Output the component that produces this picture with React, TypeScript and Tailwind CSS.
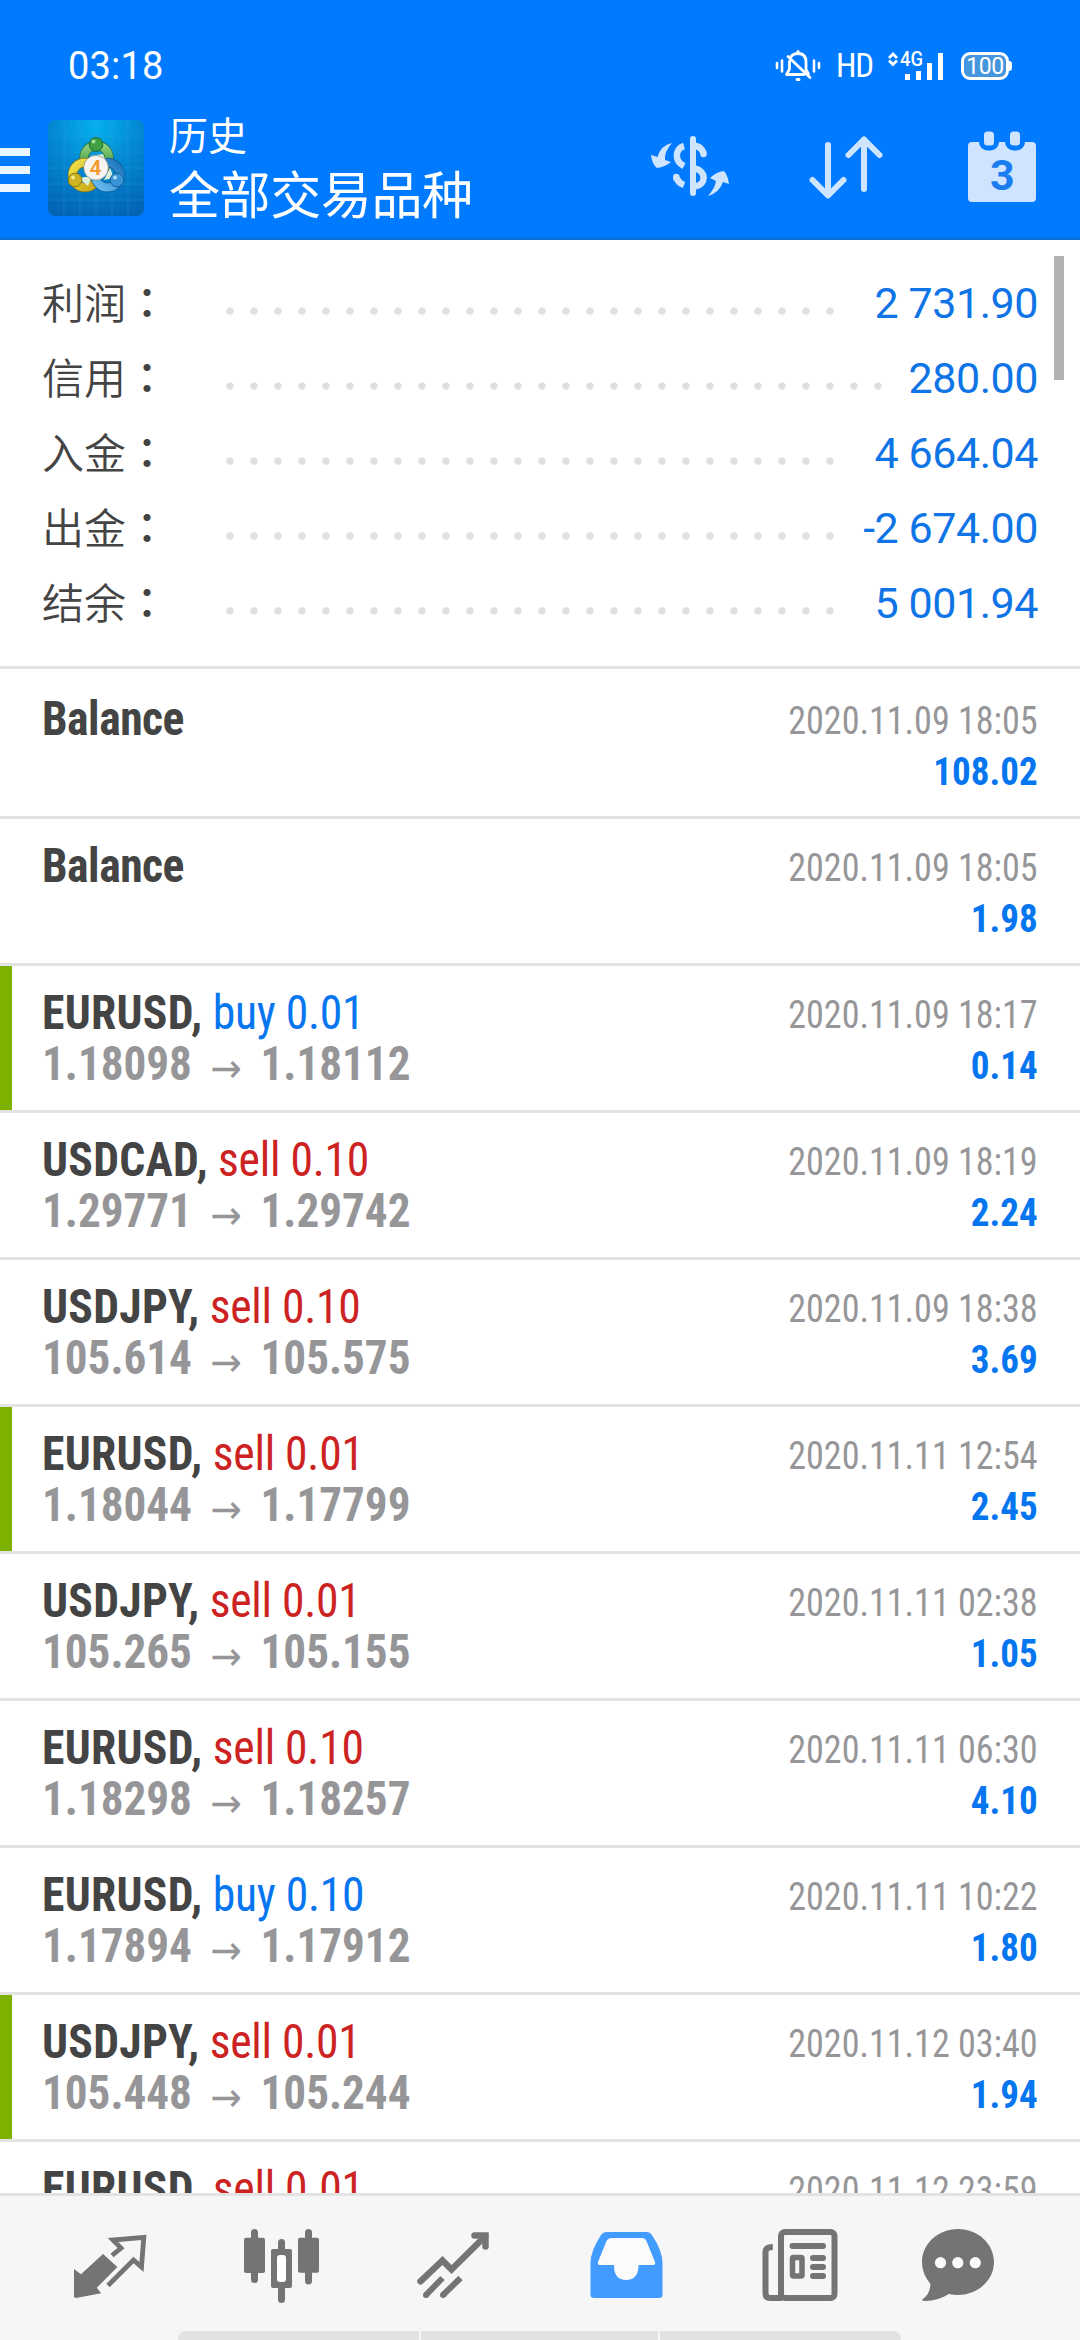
import type { ReactNode } from 'react';

type Deal = {
  symbol: string;
  side?: 'buy' | 'sell';
  volume?: string;
  from?: string;
  to?: string;
  time: string;
  profit?: string;
  marked?: boolean;
};

const SUMMARY = [
  { label: '利润', value: '2 731.90' },
  { label: '信用', value: '280.00' },
  { label: '入金', value: '4 664.04' },
  { label: '出金', value: '-2 674.00' },
  { label: '结余', value: '5 001.94' },
];

const DEALS: Deal[] = [
  { symbol: 'Balance', time: '2020.11.09 18:05', profit: '108.02' },
  { symbol: 'Balance', time: '2020.11.09 18:05', profit: '1.98' },
  { symbol: 'EURUSD', side: 'buy', volume: '0.01', from: '1.18098', to: '1.18112', time: '2020.11.09 18:17', profit: '0.14', marked: true },
  { symbol: 'USDCAD', side: 'sell', volume: '0.10', from: '1.29771', to: '1.29742', time: '2020.11.09 18:19', profit: '2.24' },
  { symbol: 'USDJPY', side: 'sell', volume: '0.10', from: '105.614', to: '105.575', time: '2020.11.09 18:38', profit: '3.69' },
  { symbol: 'EURUSD', side: 'sell', volume: '0.01', from: '1.18044', to: '1.17799', time: '2020.11.11 12:54', profit: '2.45', marked: true },
  { symbol: 'USDJPY', side: 'sell', volume: '0.01', from: '105.265', to: '105.155', time: '2020.11.11 02:38', profit: '1.05' },
  { symbol: 'EURUSD', side: 'sell', volume: '0.10', from: '1.18298', to: '1.18257', time: '2020.11.11 06:30', profit: '4.10' },
  { symbol: 'EURUSD', side: 'buy', volume: '0.10', from: '1.17894', to: '1.17912', time: '2020.11.11 10:22', profit: '1.80' },
  { symbol: 'USDJPY', side: 'sell', volume: '0.01', from: '105.448', to: '105.244', time: '2020.11.12 03:40', profit: '1.94', marked: true },
  { symbol: 'EURUSD', side: 'sell', volume: '0.01', time: '2020.11.12 23:59' },
];

export default function App() {
  return (
    <div className="flex h-[2340px] w-[1080px] flex-col overflow-hidden bg-white font-['Roboto','Noto_Sans_CJK_SC',sans-serif]">
      <header className="h-[240px] shrink-0 border-b-3 border-[#0a6edc] bg-[#007aff]">
        <StatusBar />
        <Toolbar />
      </header>
      <main className="relative min-h-0 flex-1 overflow-hidden">
        <Summary />
        <ul>
          {DEALS.map((deal, i) => (
            <DealRow key={i} deal={deal} first={i === 0} />
          ))}
        </ul>
        {/* scrollbar thumb */}
        <div className="absolute top-4 right-4 h-[124px] w-[10px] bg-[#b2b2b2]" />
      </main>
      <TabBar />
    </div>
  );
}

function StatusBar() {
  return (
    <div className="flex h-[108px] items-start justify-between pr-[68px] pl-[68px] text-white">
      <span className="mt-[42px] text-[38px] leading-[48px] tracking-[0.2px]">03:18</span>
      <div className="mt-[46px] flex h-10 items-center">
        <svg className="h-10 w-[46px]" viewBox="0 0 46 40" fill="none" stroke="#fff" strokeLinecap="round">
          <path d="M2 17v5M7 14.5v11M39 14.5v11M44 17v5" strokeWidth="2.6" />
          <path
            d="M16 10.5Q18.5 7.5 23 7.5Q31 7.5 31 16V23.5L33.5 28M14.5 15.5V23L11.5 28.5H29M13 10.5L35 31.5"
            strokeWidth="2.8"
            strokeLinejoin="round"
          />
          <path d="M23 5.5v1.5M22 33.5h2" strokeWidth="3" />
        </svg>
        <span className="ml-[15px] w-[39px] text-[33px] leading-10 tracking-[-1.2px] font-stretch-[80%]">HD</span>
        <svg className="ml-[12px] h-10 w-[60px]" viewBox="0 0 60 40">
          <path d="M2 12l4-4 4 4M2 14.5l4 4 4-4" fill="none" stroke="#fff" strokeWidth="2.8" />
          <text x="13" y="20" fill="#fff" fontSize="20" fontWeight="500" textLength="23" lengthAdjust="spacingAndGlyphs">
            4G
          </text>
          <path d="M20.5 28v6M31.5 25v9M42.5 17v17M53.5 7v27" stroke="#fff" strokeWidth="5" />
        </svg>
        <div className="ml-[14px] flex h-[28px] w-[48px] items-center justify-center rounded-[9px] border-3 border-white bg-[#4596dd] text-[23px] leading-none tracking-[-0.5px]">
          100
        </div>
        <div className="h-[10px] w-[3px] rounded-r-full bg-white" />
      </div>
    </div>
  );
}

function Toolbar() {
  return (
    <div className="flex h-[129px] items-start">
      <div className="mt-10 flex w-[30px] flex-col gap-[10px]">
        <div className="h-2 bg-[#eaf6ff]" />
        <div className="h-2 bg-[#eaf6ff]" />
        <div className="h-2 bg-[#eaf6ff]" />
      </div>
      <Logo />
      <div className="mt-[3px] ml-[25px] flex flex-col text-white">
        <span className="text-[39px] leading-[52px]">历史</span>
        <span className="mt-[2px] text-[51px] leading-[64px] tracking-[-0.4px]">全部交易品种</span>
      </div>
      <svg className="mt-[22px] ml-auto h-[72px] w-[90px]" viewBox="0 0 90 72" fill="none" stroke="#cfe5ff" strokeWidth="6.5">
        <path d="M48 9v54" strokeWidth="6" strokeLinecap="round" />
        <path d="M39 16C30 18.5 29 31 39 36M39 55Q33.5 53 31.5 48" />
        <path d="M51 16Q57 17.5 58.5 23.5M31.3 47v1M58.5 23v1" strokeLinecap="round" />
        <path d="M50 38.5C61.5 41 61.5 54.500 50 56.500" />
        <path
          d="M27 13Q16 15 12.5 27L6 25Q7 34 12 38Q20 37 26 32L20 30Q19 22 27 13ZM63 66Q74 63 78 52L84 54Q83 46 79 41Q71 42 65 48L71 51Q70 58 63 66Z"
          fill="#cfe5ff"
          stroke="none"
        />
      </svg>
      <svg
        className="mt-[22px] ml-[66px] h-[72px] w-[90px]"
        viewBox="0 0 90 72"
        fill="none"
        stroke="#cfe5ff"
        strokeWidth="6"
        strokeLinecap="round"
        strokeLinejoin="round"
      >
        <path d="M27 15v50M11.5 50L27 65.5L42.5 50" />
        <path d="M63 59V9.5M47.5 25L63 9.5L78.5 25" />
      </svg>
      <svg className="mt-[18px] mr-9 ml-[69px] h-[80px] w-[84px]" viewBox="0 0 84 80">
        <rect x="8" y="16" width="68" height="60" rx="4" fill="#cfe5ff" />
        <g fill="#cfe5ff" stroke="#007aff" strokeWidth="5">
          <rect x="21.5" y="3" width="15" height="19" rx="6" />
          <rect x="47.5" y="3" width="15" height="19" rx="6" />
        </g>
        <text x="42.3" y="63.5" fill="#1a7df2" fontSize="43" fontWeight="700" textAnchor="middle" className="font-stretch-[88%]">
          3
        </text>
      </svg>
    </div>
  );
}

function Logo() {
  return (
    <svg className="mt-3 ml-[18px] h-24 w-24" viewBox="0 0 96 96">
      <defs>
        <radialGradient id="logoBg" cx="0.5" cy="0.05" r="1">
          <stop offset="0" stopColor="#05b0ec" />
          <stop offset="0.45" stopColor="#0389d2" />
          <stop offset="1" stopColor="#0263b4" />
        </radialGradient>
        <linearGradient id="logoGreen" x1="0" y1="0" x2="0" y2="1">
          <stop offset="0" stopColor="#8fd07a" />
          <stop offset="1" stopColor="#2c8a36" />
        </linearGradient>
        <linearGradient id="logoYellow" x1="0" y1="0" x2="1" y2="1">
          <stop offset="0" stopColor="#efe04a" />
          <stop offset="1" stopColor="#c9a516" />
        </linearGradient>
        <linearGradient id="logoBlue" x1="0" y1="1" x2="1" y2="0">
          <stop offset="0" stopColor="#6cc0f2" />
          <stop offset="1" stopColor="#1b74bb" />
        </linearGradient>
      </defs>
      <rect width="96" height="96" rx="7" fill="url(#logoBg)" />
      <path
        d="M16 0v96M32 0v96M48 0v96M64 0v96M80 0v96M0 16h96M0 32h96M0 48h96M0 64h96M0 80h96"
        stroke="#5cc4f0"
        strokeOpacity="0.18"
      />
      {/* three interlocked rings */}
      <g fill="none">
        <circle cx="48.5" cy="38" r="12.5" stroke="#2c6a34" strokeWidth="9.4" />
        <circle cx="48.5" cy="38" r="12.5" stroke="url(#logoGreen)" strokeWidth="8" />
        <circle cx="37" cy="55" r="12.5" stroke="#77701c" strokeWidth="9.4" />
        <circle cx="37" cy="55" r="12.5" stroke="url(#logoYellow)" strokeWidth="8" />
        <circle cx="59.5" cy="55" r="12.5" stroke="#13578e" strokeWidth="9.4" />
        <circle cx="59.5" cy="55" r="12.5" stroke="url(#logoBlue)" strokeWidth="8" />
      </g>
      <path d="M42 36L55 34L60 46ZM30 58L44 56L40 66ZM62 48L66 58L56 60Z" fill="#dcefd8" />
      <circle cx="48" cy="24.5" r="6.8" fill="#3f9f45" stroke="#1f6a2c" />
      <circle cx="45.5" cy="21.5" r="2" fill="#a6dc98" />
      <circle cx="27" cy="60" r="6.8" fill="#cdb322" stroke="#8a7a14" />
      <circle cx="25" cy="57.5" r="2" fill="#f3ea8c" />
      <circle cx="69" cy="60" r="6.8" fill="#3a93d4" stroke="#125d9c" />
      <circle cx="67" cy="57.5" r="2" fill="#a9daf7" />
      <circle cx="48" cy="47.7" r="12.3" fill="#f8f5f1" stroke="#8b8b80" strokeWidth="0.7" />
      <text x="47.5" y="55" fill="#f59a2e" fontSize="21" fontWeight="600" textAnchor="middle">
        4
      </text>
    </svg>
  );
}

function Summary() {
  return (
    <dl className="h-[429px] border-b-3 border-[#e3e3e3] pt-[26px] pr-[42px] pl-[42px]">
      {SUMMARY.map(({ label, value }) => (
        <div key={label} className="flex h-[75px] items-start">
          <dt className="w-[176px] text-[42px] leading-[69px] font-[350] text-[#444]">
            {label}
            <span className="font-['Noto_Sans_CJK_TC'] font-medium">：</span>
          </dt>
          <div className="mt-[41px] mr-[25px] h-2 flex-1 bg-[radial-gradient(circle_at_12px_4px,#e0e0e0_3.3px,transparent_4.2px)] bg-size-[24px_8px]" />
          <dd className="text-[43px] leading-[75px] tracking-[-0.45px] text-[#0f74e6]">{value}</dd>
        </div>
      ))}
    </dl>
  );
}

function DealRow({ deal, first }: { deal: Deal; first: boolean }) {
  return (
    <li
      className={`flex border-b-3 border-[#e3e3e3] font-['Roboto_Condensed'] leading-[51px] ${
        first ? 'h-[150px] pt-[3px]' : 'h-[147px]'
      }`}
    >
      <div className={`w-3 shrink-0 ${deal.marked ? 'bg-[#7eb000]' : ''}`} />
      <div className="flex flex-1 justify-between pr-[42px] pl-[30px]">
        <div className="pt-[21px] text-[48px]">
          <p className="origin-left scale-x-95">
            <span className={`font-bold text-[#444] ${deal.side ? 'tracking-[0.3px]' : 'tracking-[-0.5px]'}`}>
              {deal.symbol}
              {deal.side && ','}
            </span>
            {deal.side && (
              <span className={`tracking-[-0.25px] ${deal.side === 'buy' ? 'text-[#0676f0]' : 'text-[#cc2222]'}`}>
                {' '}
                {deal.side} {deal.volume}
              </span>
            )}
          </p>
          {deal.from && (
            <p className="flex origin-left scale-x-94 font-bold text-[#969698]">
              <span>{deal.from}</span>
              <span className="mt-[5px] -mb-[5px] w-[73px] text-center font-['DejaVu_Sans'] text-[40px] font-normal">→</span>
              <span>{deal.to}</span>
            </p>
          )}
        </div>
        <div className="pt-6 text-right text-[39px]">
          <p className="origin-right scale-x-[0.925] text-[#969698]">{deal.time}</p>
          <p className="origin-right scale-x-95 font-bold text-[#0676f0]">{deal.profit}</p>
        </div>
      </div>
    </li>
  );
}

function TabIcon({ children }: { children: ReactNode }) {
  return (
    <svg className="h-24 w-24" viewBox="0 0 96 96">
      {children}
    </svg>
  );
}

function TabBar() {
  return (
    <nav className="flex h-[147px] shrink-0 flex-col justify-between border-t-3 border-[#e3e3e3] bg-[#f6f6f6]">
      <div className="mt-[21px] flex gap-[76px] pl-[62px]">
        {/* quotes */}
        <TabIcon>
          <path d="M12 52L19 57.3L41 37L55.4 50L34.8 70.7L39.2 76.3L14 81L12 80Z" fill="#747474" />
          <path
            d="M50 38.5L59 31L51 23L81.8 20.3L79.5 50L71.5 43L46 68.5"
            fill="none"
            stroke="#747474"
            strokeWidth="4.8"
          />
        </TabIcon>
        {/* chart */}
        <TabIcon>
          <g fill="#747474">
            <rect x="17" y="12" width="7" height="54" rx="3.5" />
            <rect x="10" y="20.7" width="21" height="35.3" rx="2" />
            <rect x="44" y="22" width="7" height="64" rx="3.5" />
            <rect x="37" y="32" width="21" height="39" rx="2" />
            <rect x="71" y="12" width="7" height="55.5" rx="3.5" />
            <rect x="64" y="20.7" width="21" height="35" rx="2" />
          </g>
          <rect x="43" y="38" width="9" height="27" rx="3" fill="#fff" />
        </TabIcon>
        {/* trade */}
        <TabIcon>
          <g fill="none" stroke="#747474" strokeWidth="6.5" strokeLinecap="round">
            <path d="M14.5 64.3L36.5 43.5L45.5 52.5L79 19.5" />
            <path d="M68.5 18.5H79.5V29.5" />
          </g>
          <path d="M20 78L36.5 61M37 78L54.5 61" stroke="#747474" strokeWidth="6" />
          <path d="M20 78h.1M37 78h.1" stroke="#747474" strokeWidth="6" strokeLinecap="round" />
        </TabIcon>
        {/* history, the open tab */}
        <TabIcon>
          <path
            fill="#429cff"
            d="M29 15H69Q72 15 74 18Q84.5 34 84.5 46V78Q84.5 81 81 81H16Q12.5 81 12.5 78V46Q12.5 34 23 18Q25 15 29 15Z"
          />
          <path
            fill="#fbfbfb"
            d="M34 21H64Q67 21 68.5 24L77 45Q78 48 75 48H60.5Q60.5 63 48 63Q36 63 36 48H22Q19 48 20 45L28.5 24Q30 21 34 21Z"
          />
        </TabIcon>
        {/* news */}
        <TabIcon>
          <g fill="none" stroke="#747474" strokeWidth="6">
            <rect x="31" y="15" width="53.5" height="66" rx="4" />
            <path d="M22.8 30Q15.5 30 15.5 35V76Q15.5 81 20 81H32" />
          </g>
          <path d="M42.5 29H73M63 41H73M63 50H73M63 59H73" stroke="#747474" strokeWidth="6" strokeLinecap="round" />
          <rect x="42.5" y="40.5" width="9.5" height="18.5" rx="1" fill="none" stroke="#747474" strokeWidth="5.5" />
        </TabIcon>
        {/* messages */}
        <TabIcon>
          <path
            fill="#747474"
            d="M36 12C56 12 72 27 72 45S56 78 36 78Q31 78 26.8 77Q16 84 3 84Q-1 84 .8 82Q8 77 8.5 67Q0 57 0 45C0 27 16 12 36 12Z"
          />
          <g fill="#fbfbfb">
            <circle cx="18.5" cy="45.7" r="5.6" />
            <circle cx="35.8" cy="45.7" r="5.6" />
            <circle cx="53.3" cy="45.7" r="5.6" />
          </g>
        </TabIcon>
      </div>
      <div className="ml-[178px] flex h-[9px] w-[723px] gap-[2px] overflow-hidden rounded-t-lg">
        <div className="flex-1 bg-[#e2e2e2]" />
        <div className="w-[237px] bg-[#e2e2e2]" />
        <div className="flex-1 bg-[#e2e2e2]" />
      </div>
    </nav>
  );
}
